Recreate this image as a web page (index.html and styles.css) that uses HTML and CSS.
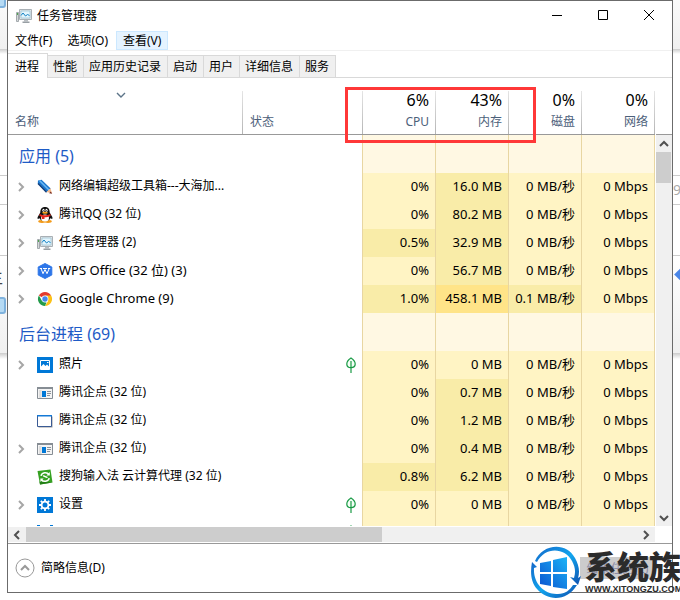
FILE: index.html
```html
<!DOCTYPE html>
<html lang="zh-CN">
<head>
  <meta charset="UTF-8">
  <meta name="viewport" content="width=device-width, initial-scale=1.0">
  <title>任务管理器</title>
  <link rel="stylesheet" href="styles.css">
</head>
<body>
  <!-- 图标 -->
  <svg class="sprite" aria-hidden="true">
    <symbol id="i-monitor" viewBox="0 0 16 16">
      <path d="M.5 4.500h2v9h-2z" fill="#d5d8da" stroke="#a3a9ad"/>
      <path d="M1 5h1v2H1z" fill="#4fa64f"/>
      <path d="M3.500 1.500h12v10h-12z" fill="#dfe4e7" stroke="#a9b0b5"/>
      <path d="M5 3h9v7H5z" fill="#e3f5fd" stroke="#8fb9cf" stroke-width=".6"/>
      <path d="M5 7.500l2-2.500 2.500 3 2-1.500 2 1" fill="none" stroke="#1382c5"/>
      <path d="M8 12h4v1.500H8z" fill="#b9bec2"/>
      <path d="M6.500 13.500h7v1.500h-7z" fill="#989fa4"/>
    </symbol>
    <symbol id="i-pencil" viewBox="0 0 16 16">
      <path d="M1 1.500L4.500.8l9.200 8.700-4.200 3.700L.8 4.500z" fill="#1a75cc"/>
      <path d="M2.500 1.500L12 11" stroke="#6ab9f5" stroke-width="1.500"/>
      <path d="M1 4.500l8.500 8.700" stroke="#123d78" stroke-width="1.300"/>
      <path d="M13.500 9.300l1.500 5-5.500-1.200z" fill="#f3b98c"/>
      <path d="M13.700 12.500l1.500 2.300-3-.5z" fill="#742a20"/>
    </symbol>
    <symbol id="i-qq" viewBox="0 0 16 16">
      <ellipse cx="5" cy="14.500" rx="3.800" ry="1.400" fill="#f39a18"/>
      <ellipse cx="11" cy="14.500" rx="3.800" ry="1.400" fill="#f39a18"/>
      <path d="M8 0C4.700 0 3.300 2.200 3.300 5.500L.7 10c-.6 2 .3 2.600 1.600 1 1 4 10.400 4 11.400 0 1.300 1.600 2.200 1 1.600-1l-2.600-4.500C12.700 2.200 11.300 0 8 0z" fill="#111"/>
      <ellipse cx="8" cy="11" rx="4" ry="3.500" fill="#fff"/>
      <ellipse cx="6.500" cy="3.300" rx="1.100" ry="1.500" fill="#fff"/>
      <ellipse cx="9.500" cy="3.300" rx="1.100" ry="1.500" fill="#fff"/>
      <circle cx="6.800" cy="3.500" r=".5"/><circle cx="9.200" cy="3.500" r=".5"/>
      <ellipse cx="8" cy="5.800" rx="2.800" ry="1" fill="#f7a31c"/>
      <path d="M2.500 7c3.500 1.700 7.500 1.700 11 0v2c-2 1-4 1.300-6 1.300V12H4.800V9.800L2.500 9z" fill="#e1251b"/>
    </symbol>
    <symbol id="i-wps" viewBox="0 0 16 16">
      <path d="M8 .5l6.800 3.500v8L8 15.500 1.200 12V4z" fill="#2d76e8" stroke="#2d76e8" stroke-linejoin="round"/>
      <path d="M2.800 5.500H5M11 5.500h2.200M4 5.500l2 5.200 2-4.200 2 4.200 2.200-5.200M6 5.500h4" fill="none" stroke="#fff"/>
    </symbol>
    <symbol id="i-chrome" viewBox="0 0 16 16">
      <path d="M8 8L1.900 4.500A7 7 0 0 1 14.100 4.500z" fill="#e33b2e"/>
      <path d="M8 4.500h6.100A7 7 0 0 1 8 15l3-5z" fill="#fbc116"/>
      <path d="M1.900 4.500L5 9.700 8 11l1.500.5L8 15A7 7 0 0 1 1.900 4.500z" fill="#229a4a"/>
      <circle cx="8" cy="8" r="3.400" fill="#fff"/>
      <circle cx="8" cy="8" r="2.700" fill="#4587ed"/>
    </symbol>
    <symbol id="i-photo" viewBox="0 0 16 16">
      <path d="M0 0h16v16H0z" fill="#0078d7"/>
      <path d="M3.500 3.500h9v9h-9z" fill="none" stroke="#fff"/>
      <path d="M4 9.500L6.500 7l2 2L10 7.500l2.500 2.500v2.500H4z" fill="#fff"/>
      <path d="M10 5h1.500v1H10z" fill="#fff"/>
    </symbol>
    <symbol id="i-app" viewBox="0 0 16 16">
      <path d="M.5 2.500h15v11H.5z" fill="#f4f4f4" stroke="#868d94"/>
      <path d="M0 2h16v2H0z" fill="#868d94"/>
      <path d="M2 5h2.500v8H2z" fill="#dedede"/>
      <path d="M5 6h4v6H5z" fill="#0078d7"/>
      <path d="M10 6.500h4M10 8.500h4M10 10.500h3" stroke="#8b9299"/>
    </symbol>
    <symbol id="i-window" viewBox="0 0 16 16">
      <path d="M1.500 3.500h14v11h-14z" fill="#9a9a9a"/>
      <path d="M.5 2.500h14v11H.5z" fill="#fff" stroke="#3a5a94"/>
      <path d="M0 2h15v1.500H0z" fill="#1479d6"/>
    </symbol>
    <symbol id="i-sogou" viewBox="0 0 16 16">
      <path d="M.5 2L13.500.5l2 13L3 15.500z" fill="#36a122"/>
      <path d="M3 15.500l-.6-3 13.100 1z" fill="#237f16"/>
      <path d="M4 6.800c.8-3.600 6-4.200 8-1.300M12.200 9.200c-.8 3.600-6 4.200-8 1.300" fill="none" stroke="#fff" stroke-width="1.500"/>
      <path d="M6 7.200c1.500-1 3 1.800 4.500.8" fill="none" stroke="#fff" stroke-width="1.500"/>
      <path d="M12.800 3v3.500H9.500zM3.400 13V9.500h3.300z" fill="#fff"/>
    </symbol>
    <symbol id="i-gear" viewBox="0 0 16 16">
      <path d="M0 0h16v16H0z" fill="#0078d7"/>
      <path d="M8 2v12M2 8h12M3.800 3.800l8.400 8.400M12.200 3.800l-8.400 8.400" stroke="#fff" stroke-width="1.800"/>
      <circle cx="8" cy="8" r="3.400" fill="#0078d7" stroke="#fff" stroke-width="1.800"/>
    </symbol>
    <symbol id="i-frame" viewBox="0 0 16 16">
      <path d="M0 3V0h3v1H1v2zM13 0h3v3h-1V1h-2zM0 13h1v2h2v1H0zM15 13h1v3h-3v-1h2z" fill="#0078d7"/>
    </symbol>
    <symbol id="i-leaf" viewBox="0 0 10 16">
      <path d="M5 1C2 3 .8 5 .8 7c0 2.500 2 3.700 4.200 3.700S9.200 9.500 9.200 7C9.200 5 8 3 5 1z" fill="#f4fff6" stroke="#199a45" stroke-width="1.200"/>
      <path d="M5 4v12" stroke="#199a45" stroke-width="1.200"/>
    </symbol>
    <symbol id="i-right" viewBox="0 0 8 10">
      <path d="M2 1l4 4-4 4" fill="none" stroke="currentColor" stroke-width="2"/>
    </symbol>
    <symbol id="i-down" viewBox="0 0 10 8">
      <path d="M1 2l4 4 4-4" fill="none" stroke="currentColor" stroke-width="2"/>
    </symbol>
    <symbol id="i-sort" viewBox="0 0 10 8">
      <path d="M1 2l4 4 4-4" fill="none" stroke="#5c7488" stroke-width="1.400"/>
    </symbol>
    <symbol id="i-up" viewBox="0 0 10 8">
      <path d="M1 6l4-4 4 4" fill="none" stroke="currentColor" stroke-width="2"/>
    </symbol>
  </svg>

  <!-- 窗口后面的内容 -->
  <div class="backdrop" aria-hidden="true">
    <i class="line line-1"></i>
    <i class="line line-2"></i>
    <i class="line line-3"></i>
    <span class="scrap scrap-char">主</span>
    <i class="scrap scrap-note-top"></i>
    <i class="scrap scrap-note"></i>
    <span class="scrap scrap-num">99</span>
    <i class="scrap scrap-mark"></i>
  </div>

  <div class="window">
    <header class="titlebar">
      <svg class="icon"><use href="#i-monitor"/></svg>
      <h1>任务管理器</h1>
      <button aria-label="最小化"><svg viewBox="0 0 12 12"><path d="M1 5.500h10"/></svg></button>
      <button aria-label="最大化"><svg viewBox="0 0 12 12"><path d="M1.500.5h9v9h-9z"/></svg></button>
      <button aria-label="关闭"><svg viewBox="0 0 12 12"><path d="M1 0l10 10M11 0L1 10"/></svg></button>
    </header>

    <nav class="menu">
      <button>文件(F)</button>
      <button>选项(O)</button>
      <button class="active">查看(V)</button>
    </nav>

    <div class="tabs" role="tablist">
      <button role="tab" class="active" aria-selected="true">进程</button>
      <button role="tab">性能</button>
      <button role="tab">应用历史记录</button>
      <button role="tab">启动</button>
      <button role="tab">用户</button>
      <button role="tab">详细信息</button>
      <button role="tab">服务</button>
    </div>

    <main class="view">
      <div class="list">
        <table>
          <thead>
            <tr>
              <th class="col-name"><svg class="sort"><use href="#i-sort"/></svg>名称</th>
              <th class="col-status">状态</th>
              <th><b>6%</b>CPU</th>
              <th><b>43%</b>内存</th>
              <th><b>0%</b>磁盘</th>
              <th><b>0%</b>网络</th>
            </tr>
          </thead>
          <tbody>
            <tr class="group"><td>应用 (5)</td><td></td><td></td><td></td><td></td><td></td></tr>
            <tr>
              <td><div class="name"><button aria-label="展开"><svg><use href="#i-right"/></svg></button><svg class="icon"><use href="#i-pencil"/></svg><span>网络编辑超级工具箱---大海加...</span></div></td>
              <td></td><td>0%</td><td class="mid">16.0 MB</td><td>0 MB/秒</td><td>0 Mbps</td>
            </tr>
            <tr>
              <td><div class="name"><button aria-label="展开"><svg><use href="#i-right"/></svg></button><svg class="icon"><use href="#i-qq"/></svg><span>腾讯QQ (32 位)</span></div></td>
              <td></td><td>0%</td><td class="mid">80.2 MB</td><td>0 MB/秒</td><td>0 Mbps</td>
            </tr>
            <tr>
              <td><div class="name"><button aria-label="展开"><svg><use href="#i-right"/></svg></button><svg class="icon"><use href="#i-monitor"/></svg><span>任务管理器 (2)</span></div></td>
              <td></td><td class="mid">0.5%</td><td class="mid">32.9 MB</td><td>0 MB/秒</td><td>0 Mbps</td>
            </tr>
            <tr>
              <td><div class="name latin"><button aria-label="展开"><svg><use href="#i-right"/></svg></button><svg class="icon"><use href="#i-wps"/></svg><span>WPS Office (32 位) (3)</span></div></td>
              <td></td><td>0%</td><td class="mid">56.7 MB</td><td>0 MB/秒</td><td>0 Mbps</td>
            </tr>
            <tr>
              <td><div class="name latin"><button aria-label="展开"><svg><use href="#i-right"/></svg></button><svg class="icon"><use href="#i-chrome"/></svg><span>Google Chrome (9)</span></div></td>
              <td></td><td class="mid">1.0%</td><td class="high">458.1 MB</td><td class="mid">0.1 MB/秒</td><td>0 Mbps</td>
            </tr>
            <tr class="group"><td>后台进程 (69)</td><td></td><td></td><td></td><td></td><td></td></tr>
            <tr>
              <td><div class="name"><button aria-label="展开"><svg><use href="#i-right"/></svg></button><svg class="icon"><use href="#i-photo"/></svg><span>照片</span></div></td>
              <td><svg class="leaf"><use href="#i-leaf"/></svg></td><td>0%</td><td>0 MB</td><td>0 MB/秒</td><td>0 Mbps</td>
            </tr>
            <tr>
              <td><div class="name single"><svg class="icon"><use href="#i-app"/></svg><span>腾讯企点 (32 位)</span></div></td>
              <td></td><td>0%</td><td class="mid">0.7 MB</td><td>0 MB/秒</td><td>0 Mbps</td>
            </tr>
            <tr>
              <td><div class="name single"><svg class="icon"><use href="#i-window"/></svg><span>腾讯企点 (32 位)</span></div></td>
              <td></td><td>0%</td><td class="mid">1.2 MB</td><td>0 MB/秒</td><td>0 Mbps</td>
            </tr>
            <tr>
              <td><div class="name"><button aria-label="展开"><svg><use href="#i-right"/></svg></button><svg class="icon"><use href="#i-app"/></svg><span>腾讯企点 (32 位)</span></div></td>
              <td></td><td>0%</td><td class="mid">0.4 MB</td><td>0 MB/秒</td><td>0 Mbps</td>
            </tr>
            <tr>
              <td><div class="name single"><svg class="icon"><use href="#i-sogou"/></svg><span>搜狗输入法 云计算代理 (32 位)</span></div></td>
              <td></td><td class="mid">0.8%</td><td class="mid">6.2 MB</td><td>0 MB/秒</td><td>0 Mbps</td>
            </tr>
            <tr>
              <td><div class="name"><button aria-label="展开"><svg><use href="#i-right"/></svg></button><svg class="icon"><use href="#i-gear"/></svg><span>设置</span></div></td>
              <td><svg class="leaf"><use href="#i-leaf"/></svg></td><td>0%</td><td>0 MB</td><td>0 MB/秒</td><td>0 Mbps</td>
            </tr>
            <tr>
              <td><div class="name single"><svg class="icon"><use href="#i-frame"/></svg></div></td>
              <td><svg class="leaf"><use href="#i-leaf"/></svg></td><td></td><td></td><td></td><td></td>
            </tr>
          </tbody>
        </table>
      </div>
      <div class="vscroll">
        <div class="vscroll-head"></div>
        <button aria-label="向上滚动"><svg><use href="#i-up"/></svg></button>
        <div class="thumb"></div>
        <button class="end" aria-label="向下滚动"><svg><use href="#i-down"/></svg></button>
      </div>
    </main>

    <div class="hscroll">
      <button aria-label="向左滚动"><svg class="flip"><use href="#i-right"/></svg></button>
      <div class="thumb"></div>
      <button class="end" aria-label="向右滚动"><svg><use href="#i-right"/></svg></button>
    </div>

    <footer class="footer">
      <button class="brief">
        <svg viewBox="0 0 20 20"><circle cx="10" cy="10" r="9"/><path d="M6 12l4-4 4 4" stroke-width="2"/></svg>
        <span>简略信息(D)</span>
      </button>
      <button class="end-task" disabled>结束任务(E)</button>
    </footer>

    <div class="highlight"></div>
  </div>

  <div class="watermark">
    <svg viewBox="0 0 50 52">
      <defs>
        <linearGradient id="ring" x1="0" y1="0" x2="1" y2="1">
          <stop offset="0" stop-color="#1467c8"/>
          <stop offset=".5" stop-color="#12a5ee"/>
          <stop offset="1" stop-color="#0d4fae"/>
        </linearGradient>
        <linearGradient id="flag" x1="0" y1="1" x2="1" y2="0">
          <stop offset="0" stop-color="#0a52cf"/>
          <stop offset="1" stop-color="#1cb4f7"/>
        </linearGradient>
      </defs>
      <circle cx="25" cy="26" r="23" fill="#fff"/>
      <path d="M4 15C11-2 35-5 44 12c4 7 5 14 3 20l3-2-3 9-8-8 4 1c2-7 1-11-2-17C33 1 14 1 6 16z" fill="url(#ring)"/>
      <path d="M1 16l5 5-3 1c-1 16 11 27 24 26 7 0 12-4 15-9l4 0C36 56 16 55 6 43 0 36-1 27 1 16z" fill="url(#ring)"/>
      <path d="M9 17l11-2v11H9zM22 14l14-3v15H22zM9 28h11v12L9 38zM22 28h14v15l-14-2z" fill="url(#flag)"/>
    </svg>
    <div class="watermark-text">
      <strong>系统族</strong>
      <span>WWW.XITONGZU.COM</span>
    </div>
  </div>
</body>
</html>
```
FILE: styles.css
```css
* {
  box-sizing: border-box;
}
body {
  margin: 0;
  height: 100vh;
  padding: 0 7px 7px;
  overflow: hidden;
  position: relative;
  background: #fff;
  font-family: "Noto Sans", "Noto Sans CJK SC", sans-serif;
  font-size: 12px;
  color: #000;
}
h1 {
  margin: 0;
  font-size: 12px;
  font-weight: normal;
}
button {
  border: none;
  padding: 0;
  margin: 0;
  background: none;
  font: inherit;
  color: inherit;
}
svg {
  display: block;
  flex: none;
}
.sprite {
  position: absolute;
  width: 0;
  height: 0;
}
.icon {
  width: 16px;
  height: 16px;
}

/* 背景 */
.backdrop {
  position: absolute;
  inset: 0;
  overflow: hidden;
  background:
    linear-gradient(#fafafa, #f0f0f0) 0 0 / 100% 49px no-repeat,
    linear-gradient(#ccc, #fff) 0 49px / 100% 5px no-repeat,
    linear-gradient(#fff, #f0f0f0) 0 256px / 100% 97px no-repeat,
    linear-gradient(#ccc, #fff) 0 353px / 100% 6px no-repeat;
}
.line {
  position: absolute;
  left: 0;
  right: 0;
  height: 1px;
  background: #ccc;
}
.line-1 {
  top: 175px;
}
.line-2 {
  top: 204px;
}
.line-3 {
  top: 255px;
}
.scrap {
  position: absolute;
}
.scrap-char {
  left: -13px;
  top: 264px;
  font-size: 16px;
  color: #444;
}
.scrap-note-top,
.scrap-note {
  left: -10px;
  width: 16px;
  height: 17px;
  border: 2px solid #7fb2dd;
  border-radius: 3px;
  background: #b5daf4;
}
.scrap-note-top {
  top: -9px;
}
.scrap-note {
  top: 297px;
}
.scrap-num {
  right: -9px;
  top: 180px;
  font-size: 14px;
  color: #aaa;
}
.scrap-mark {
  right: -5px;
  top: 270px;
  width: 9px;
  height: 9px;
  background: #4a86e8;
  transform: rotate(45deg);
}

/* 窗口 */
.window {
  position: relative;
  display: flex;
  flex-direction: column;
  height: 100%;
  border: 1px solid #6b6b6b;
  background: #fff;
}
.titlebar {
  display: flex;
  align-items: center;
  height: 30px;
  padding-left: 8px;
}
.titlebar h1 {
  flex: 1;
  padding: 0 0 2px 5px;
}
.titlebar button {
  display: flex;
  justify-content: center;
  width: 46px;
}
.titlebar button svg {
  width: 12px;
  height: 12px;
  fill: none;
  stroke: #000;
}
.menu {
  display: flex;
  gap: 1px;
  height: 20px;
  border-bottom: 1px solid #f0f0f0;
}
.menu button {
  height: 19px;
  padding: 0 6px;
  border: 1px solid transparent;
  line-height: 18px;
}
.menu .active {
  border-color: #cce8ff;
  background: #e5f3ff;
}
.tabs {
  display: flex;
  align-items: flex-end;
  height: 27px;
  border-bottom: 1px solid #d9d9d9;
}
.tabs button {
  height: 22px;
  padding: 0 6px 0 5px;
  border: 1px solid #d9d9d9;
  border-width: 1px 1px 0 0;
  background: #f0f0f0;
  line-height: 21px;
}
.tabs .active {
  height: 25px;
  padding: 0 8px 0 7px;
  margin-bottom: -1px;
  background: #fff;
}

/* 进程列表 */
.view {
  flex: 1;
  display: flex;
  min-height: 0;
}
.list {
  flex: 1;
  overflow: hidden;
  border-right: 1px solid #fff;
}
table {
  width: 100%;
  table-layout: fixed;
  border-spacing: 0;
}
th {
  width: 73px;
  height: 57px;
  padding: 0 7px 4px 0;
  border-bottom: 1px solid #999;
  background: linear-gradient(#e5e5e5, #b5b5b5) right bottom / 1px 43px no-repeat;
  font-weight: normal;
  line-height: 17px;
  text-align: right;
  vertical-align: bottom;
  color: #4c607a;
}
th b {
  display: block;
  margin-bottom: 3px;
  font-size: 16px;
  font-weight: normal;
  line-height: 20px;
  color: #000;
}
.col-name,
.col-status {
  text-align: left;
  padding-left: 7px;
}
.col-name {
  width: auto;
  padding-right: 16px;
}
.col-status {
  width: 120px;
}
.sort {
  width: 10px;
  height: 8px;
  margin: 0 auto 14px;
}
td {
  height: 28px;
  padding: 0 6px 2px 0;
  border-right: 1px solid #e8d6a2;
  background: #fff4c4;
  font-size: 13px;
  line-height: 18px;
  text-align: right;
  white-space: nowrap;
}
td:nth-child(-n+2) {
  padding-bottom: 0;
  background: #fff;
}
td:first-child {
  border-right: none;
  text-align: left;
}
.mid {
  background: #f9eca8;
}
.high {
  background: #ffe488;
}
.group td {
  height: 38px;
  background: #fff8e3;
}
.group td:nth-child(-n+2) {
  background: #fff;
}
.group td:first-child {
  padding: 4px 0 0 11px;
  font-size: 16px;
  color: #1e5bc6;
}
.name {
  display: flex;
  align-items: center;
  font-size: 12px;
}
.name span,
.brief span {
  padding-bottom: 2px;
}
.latin {
  font-size: 13px;
}
.name button {
  width: 29px;
  padding-left: 9px;
  color: #a6a6a6;
}
.name button svg,
.hscroll svg {
  width: 8px;
  height: 10px;
}
.name .icon {
  margin-right: 6px;
}
.single {
  padding-left: 29px;
}
.leaf {
  width: 10px;
  height: 16px;
  margin-left: auto;
}

/* 滚动条 */
.vscroll {
  display: flex;
  flex-direction: column;
  width: 16px;
  background: #f0f0f0;
  color: #505050;
}
.vscroll-head {
  height: 57px;
  border-bottom: 1px solid #999;
  background: #fff;
}
.vscroll button {
  display: flex;
  align-items: center;
  justify-content: center;
  height: 17px;
}
.vscroll svg {
  width: 10px;
  height: 8px;
}
.vscroll .thumb {
  width: 15px;
  height: 31px;
  background: #cdcdcd;
}
.vscroll .end {
  margin-top: auto;
}
.hscroll {
  display: flex;
  height: 17px;
  padding-right: 17px;
  border-top: 1px solid #fff;
  border-bottom: 1px solid #fff;
  background: #f0f0f0 content-box;
  color: #505050;
}
.hscroll button {
  display: flex;
  align-items: center;
  justify-content: center;
  width: 18px;
}
.hscroll .thumb {
  width: 55%;
  background: #cdcdcd;
}
.hscroll .end {
  margin-left: auto;
}
.flip {
  transform: scaleX(-1);
}

/* 底部 */
.footer {
  display: flex;
  align-items: center;
  justify-content: space-between;
  height: 49px;
  padding: 0 17px 0 7px;
  border-top: 1px solid #999;
}
.brief {
  display: flex;
  align-items: center;
  gap: 6px;
}
.brief svg {
  width: 20px;
  height: 20px;
  fill: none;
  stroke: #999;
}
.end-task {
  width: 75px;
  height: 22px;
  background: #ccc;
  color: #8c8ca6;
}
.highlight {
  position: absolute;
  top: 86px;
  right: 136px;
  width: 191px;
  height: 56px;
  border: 3px solid #ff3838;
}

/* 水印 */
.watermark {
  position: absolute;
  right: 0;
  bottom: 2px;
  display: flex;
  gap: 4px;
}
.watermark svg {
  width: 50px;
  height: 52px;
}
.watermark-text {
  display: flex;
  flex-direction: column;
  width: 95px;
  color: #2b2b2b;
  white-space: nowrap;
}
.watermark strong {
  font-family: "Noto Sans CJK SC", sans-serif;
  font-size: 32px;
  font-weight: 900;
  line-height: 38px;
}
.watermark span {
  font-family: "Liberation Sans", sans-serif;
  font-size: 9px;
  font-weight: bold;
  line-height: 10px;
}
```
